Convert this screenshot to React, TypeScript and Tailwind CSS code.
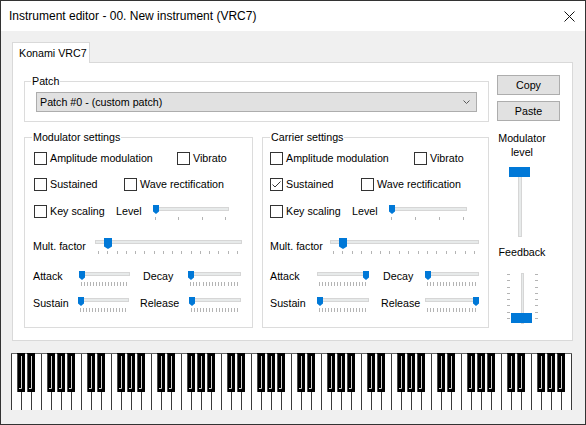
import React from 'react';

type SliderKind = 'small' | 'level' | 'mult';

const SLIDER_GEOM: Record<SliderKind, { tw: number; th: number; tt: number; track: number; tick: number; tickH: number; h: number; n: number }> = {
    small: { tw: 6, th: 9, tt: 1, track: 2, tick: 12, tickH: 4, h: 17, n: 16 },
    level: { tw: 6, th: 9, tt: 0, track: 2, tick: 12, tickH: 3, h: 16, n: 4 },
    mult: { tw: 8, th: 11, tt: 0, track: 2, tick: 13, tickH: 3, h: 17, n: 16 },
};

const BLUE = '#0078d7';

function HSlider({ kind, width, value }: { kind: SliderKind; width: number; value: number }) {
    const g = SLIDER_GEOM[kind];
    const x = Math.round(value * (width - g.tw));
    const ticks = Array.from({ length: g.n }, (_, i) => Math.round(g.tw / 2 + (i * (width - g.tw)) / (g.n - 1)) - 0.5);
    return (
        <svg width={width} height={g.h} className="shrink-0 block">
            <rect x={0.5} y={g.track + 0.5} width={width - 1} height={3} fill="#e7eaea" stroke="#d6d6d6" />
            {ticks.map((t, i) => (
                <line key={i} x1={t} x2={t} y1={g.tick} y2={g.tick + g.tickH} stroke="#b4b4b4" />
            ))}
            <polygon
                points={`${x},${g.tt} ${x + g.tw},${g.tt} ${x + g.tw},${g.tt + g.th - 2.5} ${x + g.tw / 2},${g.tt + g.th} ${x},${g.tt + g.th - 2.5}`}
                fill={BLUE}
            />
        </svg>
    );
}

function Check({ label, checked = false, className = '' }: { label: string; checked?: boolean; className?: string }) {
    return (
        <div className={'flex items-center h-[13px] shrink-0 ' + className}>
            <span className="w-[13px] h-[13px] border border-[#333333] bg-white shrink-0 flex items-center justify-center">
                {checked && (
                    <svg width="11" height="11" className="block">
                        <path d="M1.5 5.5 L4 8 L9.5 2.5" fill="none" stroke="#333333" strokeWidth="1" />
                    </svg>
                )}
            </span>
            <span className="ml-[3px] whitespace-nowrap">{label}</span>
        </div>
    );
}

function Piano() {
    const seps = Array.from({ length: 57 }, (_, k) => k * 10 + 0.5);
    const blacks: number[] = [];
    for (let oct = 0; oct < 8; oct++) {
        for (const b of [0, 1, 3, 4, 5]) blacks.push((oct * 7 + b + 1) * 10);
    }
    return (
        <svg width="561" height="58" className="block">
            <rect x="0" y="0" width="561" height="57" fill="#ffffff" />
            {seps.map((s, i) => (
                <line key={i} x1={s} x2={s} y1={0} y2={57} stroke="#3a3a3a" />
            ))}
            <line x1="0" x2="561" y1="0.5" y2="0.5" stroke="#646464" />
            {blacks.map((s, i) => (
                <g key={i}>
                    <rect x={s - 4} y={0} width={8} height={39} fill="#000000" />
                    <line x1={s - 3.5} x2={s - 3.5} y1={1} y2={39} stroke="#4a4a4a" />
                    <path d={`M${s + 0.5} 3 V35.5 H${s - 2}`} fill="none" stroke="#d4d4d4" />
                </g>
            ))}
        </svg>
    );
}

export default function App() {
    return (
        <div className="w-[586px] h-[425px] border border-[#333333] flex flex-col bg-[#f0f0f0] overflow-hidden font-['Liberation_Sans',Arial,sans-serif] text-black">
            {/* title bar */}
            <div className="h-[30px] shrink-0 bg-white flex items-center justify-between pl-[8px] pr-[10px]">
                <span className="text-[12px] whitespace-nowrap">Instrument editor - 00. New instrument (VRC7)</span>
                <svg width="11" height="11" className="block">
                    <path d="M0.5 0.5 L10.5 10.5 M10.5 0.5 L0.5 10.5" stroke="#111111" strokeWidth="1" />
                </svg>
            </div>

            <div className="flex-1 flex flex-col pl-[10px] pt-[11px] text-[10.7px] leading-[13px]">
                <div className="ml-[1px]">
                    <div className="relative z-10 w-[78px] h-[21px] -mb-px bg-white border border-b-0 border-[#d9d9d9] pl-[6px] flex items-center whitespace-nowrap">
                        Konami VRC7
                    </div>
                    <div className="w-[561px] h-[279px] bg-white border border-[#d9d9d9] flex pl-[11px] pt-[12px]">
                        {/* left column */}
                        <div className="w-[465px] shrink-0 flex flex-col">
                            <fieldset className="border border-[#dcdcdc]">
                                <legend className="ml-[6px] px-[1px]">Patch</legend>
                                <div className="px-[11px] pt-[4px] pb-[9px]">
                                    <div className="h-[20px] border border-[#adadad] bg-[#e1e1e1] flex items-center justify-between pl-[3px] pr-[6px]">
                                        <span className="whitespace-nowrap">Patch #0 - (custom patch)</span>
                                        <svg width="7" height="4" className="block">
                                            <polyline points="0.5,0.5 3.5,3.5 6.5,0.5" fill="none" stroke="#5a5a5a" />
                                        </svg>
                                    </div>
                                </div>
                            </fieldset>

                            <div className="flex gap-[9px] mt-[9px]">
                                {/* modulator */}
                                <fieldset className="w-[229px] border border-[#dcdcdc]">
                                    <legend className="ml-[7px] px-[1px] whitespace-nowrap">Modulator settings</legend>
                                    <div className="pt-[8px] pl-[9px] pb-[14px]">
                                        <div className="flex items-center h-[13px]">
                                            <Check label="Amplitude modulation" className="w-[143px]" />
                                            <Check label="Vibrato" />
                                        </div>
                                        <div className="flex items-center h-[13px] mt-[13px]">
                                            <Check label="Sustained" className="w-[90px]" />
                                            <Check label="Wave rectification" />
                                        </div>
                                        <div className="flex items-start mt-[14px]">
                                            <Check label="Key scaling" className="w-[82px]" />
                                            <span className="w-[37px] shrink-0">Level</span>
                                            <HSlider kind="level" width={76} value={0} />
                                        </div>
                                        <div className="flex items-start mt-[17px] -ml-[1px]">
                                            <span className="w-[62px] shrink-0 mt-[2px] whitespace-nowrap">Mult. factor</span>
                                            <HSlider kind="mult" width={147} value={1 / 15} />
                                        </div>
                                        <div className="flex items-start mt-[15px] -ml-[1px]">
                                            <span className="w-[46px] shrink-0">Attack</span>
                                            <HSlider kind="small" width={51} value={0} />
                                            <span className="ml-[13px] w-[45px] shrink-0">Decay</span>
                                            <HSlider kind="small" width={53} value={0} />
                                        </div>
                                        <div className="flex items-start mt-[9px] -ml-[1px]">
                                            <span className="w-[45px] shrink-0 mt-[1px]">Sustain</span>
                                            <HSlider kind="small" width={51} value={0} />
                                            <span className="ml-[11px] w-[49px] shrink-0 mt-[1px]">Release</span>
                                            <HSlider kind="small" width={52} value={0} />
                                        </div>
                                    </div>
                                </fieldset>

                                {/* carrier */}
                                <fieldset className="w-[227px] border border-[#dcdcdc]">
                                    <legend className="ml-[7px] px-[1px] whitespace-nowrap">Carrier settings</legend>
                                    <div className="pt-[8px] pl-[7px] pb-[14px]">
                                        <div className="flex items-center h-[13px]">
                                            <Check label="Amplitude modulation" className="w-[144px]" />
                                            <Check label="Vibrato" />
                                        </div>
                                        <div className="flex items-center h-[13px] mt-[13px]">
                                            <Check label="Sustained" checked className="w-[91px]" />
                                            <Check label="Wave rectification" />
                                        </div>
                                        <div className="flex items-start mt-[14px]">
                                            <Check label="Key scaling" className="w-[82px]" />
                                            <span className="w-[37px] shrink-0">Level</span>
                                            <HSlider kind="level" width={78} value={0} />
                                        </div>
                                        <div className="flex items-start mt-[17px]">
                                            <span className="w-[60px] shrink-0 mt-[2px] whitespace-nowrap">Mult. factor</span>
                                            <HSlider kind="mult" width={149} value={1 / 15} />
                                        </div>
                                        <div className="flex items-start mt-[15px]">
                                            <span className="w-[47px] shrink-0">Attack</span>
                                            <HSlider kind="small" width={52} value={1} />
                                            <span className="ml-[14px] w-[42px] shrink-0">Decay</span>
                                            <HSlider kind="small" width={54} value={0} />
                                        </div>
                                        <div className="flex items-start mt-[9px]">
                                            <span className="w-[47px] shrink-0 mt-[1px]">Sustain</span>
                                            <HSlider kind="small" width={52} value={0} />
                                            <span className="ml-[12px] w-[44px] shrink-0 mt-[1px]">Release</span>
                                            <HSlider kind="small" width={54} value={1} />
                                        </div>
                                    </div>
                                </fieldset>
                            </div>
                        </div>

                        {/* right column */}
                        <div className="ml-[8px] w-[63px] shrink-0 flex flex-col">
                            <button className="h-[20px] border border-[#adadad] bg-[#e1e1e1]">Copy</button>
                            <button className="mt-[6px] h-[20px] border border-[#adadad] bg-[#e1e1e1]">Paste</button>
                            <div className="w-[50px] flex flex-col items-center mt-[10px] leading-[14px]">
                                <span>Modulator</span>
                                <span>level</span>
                                <svg width="21" height="70" className="block mt-[8px] mr-[5px]">
                                    <rect x="9.5" y="0.5" width="3" height="69" fill="#e7eaea" stroke="#d6d6d6" />
                                    <rect x="0" y="0" width="21" height="10" fill={BLUE} />
                                </svg>
                                <span className="mt-[8px]">Feedback</span>
                                <svg width="32" height="51" className="block mt-[14px]">
                                    {Array.from({ length: 8 }, (_, i) => {
                                        const y = Math.round(1 + (i * 44) / 7) + 0.5;
                                        return (
                                            <g key={i}>
                                                <line x1="1" x2="4" y1={y} y2={y} stroke="#b4b4b4" />
                                                <line x1="29" x2="32" y1={y} y2={y} stroke="#b4b4b4" />
                                            </g>
                                        );
                                    })}
                                    <rect x="15.5" y="0.5" width="2" height="50" fill="#e7eaea" stroke="#d6d6d6" />
                                    <rect x="5" y="40" width="21" height="10" fill={BLUE} />
                                </svg>
                            </div>
                        </div>
                    </div>
                </div>

                <div className="mt-[12px]">
                    <Piano />
                </div>
            </div>
        </div>
    );
}
